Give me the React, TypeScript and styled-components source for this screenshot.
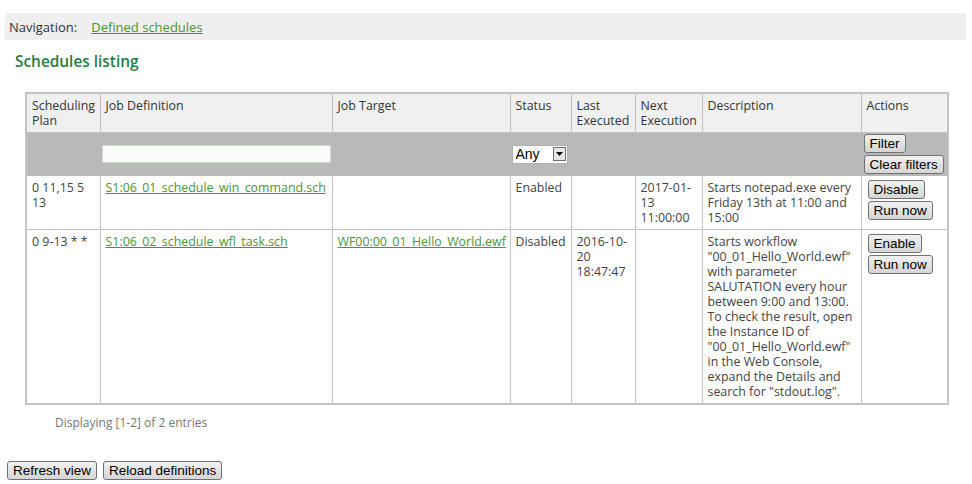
import styled, { createGlobalStyle } from 'styled-components';

const GlobalStyle = createGlobalStyle`
  body {
    margin: 0;
    background: #ffffff;
    font-family: "Open Sans", "Liberation Sans", sans-serif;
    font-size: 12.4px;
    color: #444;
  }
`

const App = () => {
  return (<Page>
    <GlobalStyle />
    <NavBar>
      <NavLabel>Navigation:</NavLabel>
      <Link href="#">Defined schedules</Link>
    </NavBar>
    <Title>Schedules listing</Title>
    <Table>
      <colgroup>
        <col style={{ width: 74 }} />
        <col style={{ width: 232 }} />
        <col style={{ width: 178 }} />
        <col style={{ width: 61 }} />
        <col style={{ width: 64 }} />
        <col style={{ width: 67 }} />
        <col style={{ width: 159 }} />
        <col style={{ width: 87 }} />
      </colgroup>
      <thead>
        <HeadRow>
          <Th>Scheduling Plan</Th>
          <Th>Job Definition</Th>
          <Th>Job Target</Th>
          <Th>Status</Th>
          <Th>Last Executed</Th>
          <Th>Next Execution</Th>
          <Th>Description</Th>
          <Th>Actions</Th>
        </HeadRow>
        <FilterRow>
          <FilterCell />
          <FilterCell><TextFilter type="text" /></FilterCell>
          <FilterCell />
          <FilterCell>
            <SelectWrap>
              <Select defaultValue="any">
                <option value="any">Any</option>
              </Select>
              <SelectArrow>
                <svg width="7" height="4" viewBox="0 0 7 4"><path d="M0 0h7L3.5 4z" fill="#000" /></svg>
              </SelectArrow>
            </SelectWrap>
          </FilterCell>
          <FilterCell />
          <FilterCell />
          <FilterCell />
          <FilterCell $actions>
            <ButtonStack>
              <Button>Filter</Button>
              <Button>Clear filters</Button>
            </ButtonStack>
          </FilterCell>
        </FilterRow>
      </thead>
      <tbody>
        <Row>
          <Td>0 11,15 5 13</Td>
          <Td><Link href="#">S1:06_01_schedule_win_command.sch</Link></Td>
          <Td />
          <Td>Enabled</Td>
          <Td />
          <Td>2017-01-13 11:00:00</Td>
          <Td>Starts notepad.exe every Friday 13th at 11:00 and 15:00</Td>
          <Td $actions>
            <ButtonStack>
              <Button>Disable</Button>
              <Button>Run now</Button>
            </ButtonStack>
          </Td>
        </Row>
        <Row>
          <Td>0 9-13 * *</Td>
          <Td><Link href="#">S1:06_02_schedule_wfl_task.sch</Link></Td>
          <Td><Link href="#">WF00:00_01_Hello_World.ewf</Link></Td>
          <Td>Disabled</Td>
          <Td>2016-10-20 18:47:47</Td>
          <Td />
          <Td>Starts workflow "00_01_Hello_World.ewf" with parameter SALUTATION every hour between 9:00 and 13:00. To check the result, open the Instance ID of "00_01_Hello_World.ewf" in the Web Console, expand the Details and search for "stdout.log".</Td>
          <Td $actions>
            <ButtonStack>
              <Button>Enable</Button>
              <Button>Run now</Button>
            </ButtonStack>
          </Td>
        </Row>
      </tbody>
    </Table>
    <Summary>Displaying [1-2] of 2 entries</Summary>
    <Footer>
      <Button>Refresh view</Button>
      <Button>Reload definitions</Button>
    </Footer>
  </Page>);
};

export default App;

const Page = styled.div`
  padding-top: 13px;
`
const NavBar = styled.div`
  display: flex;
  align-items: center;
  gap: 14px;
  height: 27px;
  margin: 0 6px 0 5px;
  padding: 0 4px;
  background: #efefef;
  color: #333;
  font-size: 13px;
`
const NavLabel = styled.span``

const Link = styled.a`
  color: #4a962e;
  text-decoration: underline;
`
const Title = styled.h2`
  margin: 12px 0 0 15px;
  font-size: 15.4px;
  line-height: 20px;
  font-weight: 600;
  color: #1d7f3c;
`
const Table = styled.table`
  margin: 20px 0 0 25px;
  width: 923px;
  table-layout: fixed;
  border-collapse: collapse;
  border: 2px solid #c4c4c4;
  line-height: 15px;
`
const HeadRow = styled.tr`
  background: #f0f0f0;
`
const Th = styled.th`
  border: 1px solid #c4c4c4;
  padding: 4px 5px 4px 5px;
  height: 30px;
  text-align: left;
  vertical-align: top;
  font-weight: normal;
  color: #333;
`
const FilterRow = styled.tr`
  background: #b9b9b9;
`
const FilterCell = styled.td<{ $actions?: boolean }>`
  border: 1px solid #b9b9b9;
  border-top-color: #c4c4c4;
  padding: ${p => p.$actions ? '1px 2px' : '0 1px'};
  height: 40px;
  vertical-align: middle;
`
const TextFilter = styled.input`
  box-sizing: border-box;
  display: block;
  width: 100%;
  height: 18px;
  margin: 0;
  border: 1px solid #c8dcc8;
  background: #f8fbf8;
  padding: 0 2px;
`
const SelectWrap = styled.div`
  position: relative;
  width: 56px;
  height: 19px;
`
const Select = styled.select`
  appearance: none;
  box-sizing: border-box;
  width: 100%;
  height: 100%;
  margin: 0;
  padding: 0 0 0 3px;
  border: 1px solid #b0b0b0;
  border-radius: 0;
  background: #ffffff;
  font-family: "Liberation Sans", Arial, sans-serif;
  font-size: 14px;
  color: #000;
`
const SelectArrow = styled.span`
  position: absolute;
  top: 2px;
  right: 2px;
  width: 13px;
  height: 14px;
  display: flex;
  align-items: center;
  justify-content: center;
  box-sizing: border-box;
  border: 1px solid #707070;
  background: #e6e6e6;
  pointer-events: none;
`
const Row = styled.tr`
  background: #ffffff;
`
const Td = styled.td<{ $actions?: boolean }>`
  border: 1px solid #c4c4c4;
  padding: ${p => p.$actions ? '4px 6px' : '4px 5px'};
  vertical-align: top;
  color: #444;
`
const ButtonStack = styled.div`
  display: flex;
  flex-direction: column;
  align-items: flex-start;
  gap: 2px;
`
const Button = styled.button`
  box-sizing: border-box;
  height: 19px;
  margin: 0;
  padding: 0 5px;
  border: 1px solid #707070;
  border-radius: 3px;
  background: linear-gradient(#f2f2f2, #e2e2e2 50%, #d6d6d6);
  font-family: "Liberation Sans", Arial, sans-serif;
  font-size: 13.5px;
  line-height: 17px;
  white-space: nowrap;
  color: #000;
`
const Summary = styled.div`
  margin: 10px 0 0 55px;
  font-size: 12px;
  line-height: 15px;
  color: #777;
`
const Footer = styled.div`
  display: flex;
  gap: 6px;
  margin: 31px 0 0 7px;
`
